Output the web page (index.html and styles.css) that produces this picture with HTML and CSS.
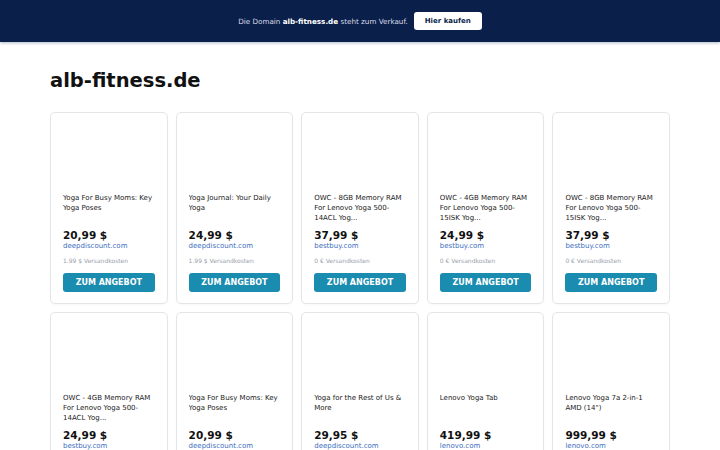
FILE: index.html
```html
<!DOCTYPE html>
<html lang="de">

<head>
    <meta charset="UTF-8">
    <meta name="viewport" content="width=device-width, initial-scale=1.0">
    <title>alb-fitness.de</title>
    <link rel="stylesheet" href="styles.css">
</head>

<body>

    <div class="topbar">
        <p class="topbar-text">Die Domain <strong>alb-fitness.de</strong> steht zum Verkauf.</p>
        <a class="topbar-btn" href="#">Hier kaufen</a>
    </div>

    <main class="page">
        <h1 class="site-title">alb-fitness.de</h1>

        <div class="grid">
            <div class="card">
                <div class="card-img"></div>
                <p class="card-title">Yoga For Busy Moms: Key Yoga Poses</p>
                <p class="card-price">20,99 $</p>
                <a class="card-shop" href="#">deepdiscount.com</a>
                <p class="card-ship">1.99 $ Versandkosten</p>
                <a class="card-btn" href="#">ZUM ANGEBOT</a>
            </div>
            <div class="card">
                <div class="card-img"></div>
                <p class="card-title">Yoga Journal: Your Daily Yoga</p>
                <p class="card-price">24,99 $</p>
                <a class="card-shop" href="#">deepdiscount.com</a>
                <p class="card-ship">1.99 $ Versandkosten</p>
                <a class="card-btn" href="#">ZUM ANGEBOT</a>
            </div>
            <div class="card">
                <div class="card-img"></div>
                <p class="card-title">OWC - 8GB Memory RAM For Lenovo Yoga 500-14ACL Yog...</p>
                <p class="card-price">37,99 $</p>
                <a class="card-shop" href="#">bestbuy.com</a>
                <p class="card-ship">0 € Versandkosten</p>
                <a class="card-btn" href="#">ZUM ANGEBOT</a>
            </div>
            <div class="card">
                <div class="card-img"></div>
                <p class="card-title">OWC - 4GB Memory RAM For Lenovo Yoga 500-15ISK Yog...</p>
                <p class="card-price">24,99 $</p>
                <a class="card-shop" href="#">bestbuy.com</a>
                <p class="card-ship">0 € Versandkosten</p>
                <a class="card-btn" href="#">ZUM ANGEBOT</a>
            </div>
            <div class="card">
                <div class="card-img"></div>
                <p class="card-title">OWC - 8GB Memory RAM For Lenovo Yoga 500-15ISK Yog...</p>
                <p class="card-price">37,99 $</p>
                <a class="card-shop" href="#">bestbuy.com</a>
                <p class="card-ship">0 € Versandkosten</p>
                <a class="card-btn" href="#">ZUM ANGEBOT</a>
            </div>

            <div class="card">
                <div class="card-img"></div>
                <p class="card-title">OWC - 4GB Memory RAM For Lenovo Yoga 500-14ACL Yog...</p>
                <p class="card-price">24,99 $</p>
                <a class="card-shop" href="#">bestbuy.com</a>
                <p class="card-ship">0 € Versandkosten</p>
                <a class="card-btn" href="#">ZUM ANGEBOT</a>
            </div>
            <div class="card">
                <div class="card-img"></div>
                <p class="card-title">Yoga For Busy Moms: Key Yoga Poses</p>
                <p class="card-price">20,99 $</p>
                <a class="card-shop" href="#">deepdiscount.com</a>
                <p class="card-ship">1.99 $ Versandkosten</p>
                <a class="card-btn" href="#">ZUM ANGEBOT</a>
            </div>
            <div class="card">
                <div class="card-img"></div>
                <p class="card-title">Yoga for the Rest of Us &amp; More</p>
                <p class="card-price">29,95 $</p>
                <a class="card-shop" href="#">deepdiscount.com</a>
                <p class="card-ship">1.99 $ Versandkosten</p>
                <a class="card-btn" href="#">ZUM ANGEBOT</a>
            </div>
            <div class="card">
                <div class="card-img"></div>
                <p class="card-title">Lenovo Yoga Tab</p>
                <p class="card-price">419,99 $</p>
                <a class="card-shop" href="#">lenovo.com</a>
                <p class="card-ship">0 € Versandkosten</p>
                <a class="card-btn" href="#">ZUM ANGEBOT</a>
            </div>
            <div class="card">
                <div class="card-img"></div>
                <p class="card-title">Lenovo Yoga 7a 2-in-1 AMD (14")</p>
                <p class="card-price">999,99 $</p>
                <a class="card-shop" href="#">lenovo.com</a>
                <p class="card-ship">0 € Versandkosten</p>
                <a class="card-btn" href="#">ZUM ANGEBOT</a>
            </div>
        </div>
    </main>

</body>

</html>
```

FILE: styles.css
```css
body {
    margin: 0;
    padding: 0;
    background-color: #fff;
    font-family: "DejaVu Sans", Verdana, sans-serif;
    color: #111;
}

.topbar {
    height: 42px;
    background-color: #0b1f4b;
    display: flex;
    align-items: center;
    justify-content: center;
    gap: 6px;
    box-shadow: 0 1px 3px rgba(30, 60, 110, 0.35);
}

.topbar-text {
    margin: 0;
    font-size: 7.2px;
    color: #d8dce6;
}

.topbar-text strong {
    color: #fff;
}

.topbar-btn {
    display: block;
    height: 18px;
    line-height: 18px;
    padding: 0 11px;
    background-color: #fff;
    color: #0b1f4b;
    font-size: 7px;
    font-weight: bold;
    text-decoration: none;
    border-radius: 3px;
}

.page {
    padding: 0 50px;
}

.site-title {
    margin: 27px 0 20px;
    font-size: 19.5px;
    line-height: 1.2;
    font-weight: bold;
    color: #111;
}

.grid {
    display: grid;
    grid-template-columns: repeat(5, 1fr);
    gap: 8px;
}

.card {
    border: 1px solid #e3e5e9;
    border-radius: 5px;
    padding: 12px 12px 11px;
    box-shadow: 0 1px 2px rgba(0, 0, 0, 0.03);
    display: flex;
    flex-direction: column;
}

.card-img {
    height: 68px;
}

.card-title {
    margin: 0;
    height: 30px;
    overflow: hidden;
    font-size: 7px;
    line-height: 10px;
    color: #222;
}

.card-price {
    margin: 6px 0 0;
    font-size: 10.5px;
    line-height: 12px;
    font-weight: bold;
    color: #111;
}

.card-shop {
    display: block;
    font-size: 7px;
    line-height: 10px;
    color: #3c6ec0;
    text-decoration: none;
}

.card-ship {
    margin: 5px 0 0;
    font-size: 6px;
    line-height: 10px;
    color: #9aa1ad;
}

.card-btn {
    display: block;
    margin-top: 7px;
    height: 19px;
    line-height: 19px;
    background-color: #1a8caf;
    color: #fff;
    font-size: 8px;
    font-weight: bold;
    text-align: center;
    text-decoration: none;
    border-radius: 3px;
}
```
